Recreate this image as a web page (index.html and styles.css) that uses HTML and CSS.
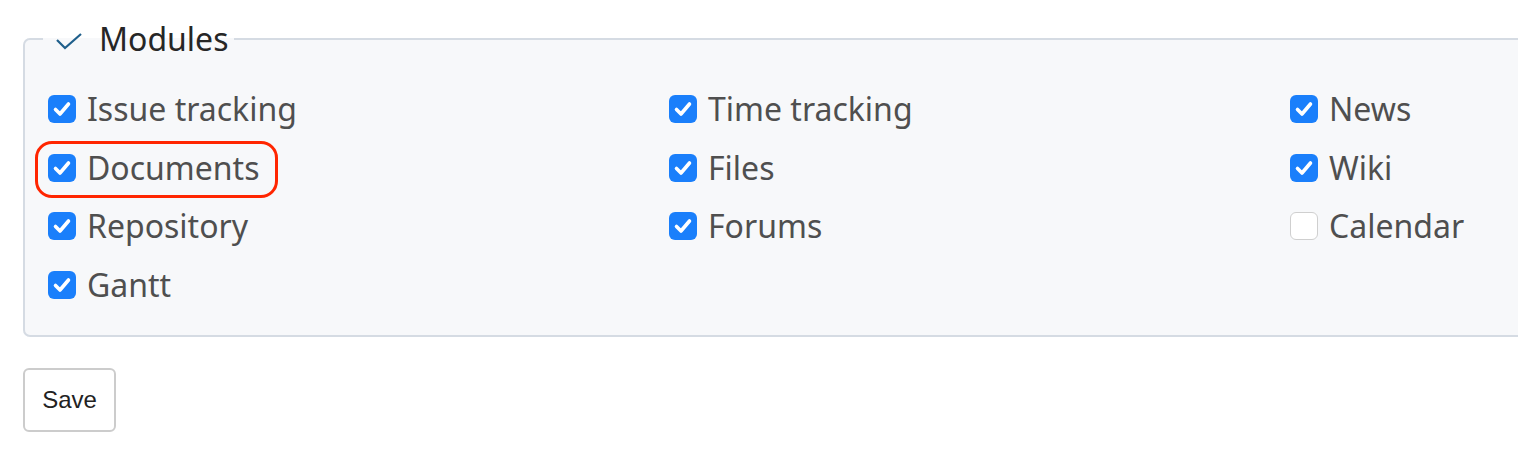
FILE: index.html
```html
<!DOCTYPE html>
<html lang="en">
<head>
<meta charset="utf-8">
<title>Modules</title>
<link rel="stylesheet" href="styles.css">
</head>
<body>
<div class="page">
  <fieldset class="box">
    <legend class="legend">
      <svg class="toggle" width="28" height="18" viewBox="0 0 28 18"><path d="M2 8 L10 16 L26 2" fill="none" stroke="#1f5f8b" stroke-width="2.2"/></svg>
      <span>Modules</span>
    </legend>
    <div class="grid">
      <label class="item"><span class="cb on"><svg viewBox="0 0 28 28"><path d="M7.5 14.5 L12 19 L20.5 9" fill="none" stroke="#fff" stroke-width="3.6" stroke-linecap="round" stroke-linejoin="round"/></svg></span>Issue tracking</label>
      <label class="item"><span class="cb on"><svg viewBox="0 0 28 28"><path d="M7.5 14.5 L12 19 L20.5 9" fill="none" stroke="#fff" stroke-width="3.6" stroke-linecap="round" stroke-linejoin="round"/></svg></span>Time tracking</label>
      <label class="item"><span class="cb on"><svg viewBox="0 0 28 28"><path d="M7.5 14.5 L12 19 L20.5 9" fill="none" stroke="#fff" stroke-width="3.6" stroke-linecap="round" stroke-linejoin="round"/></svg></span>News</label>
      <label class="item highlight"><span class="cb on"><svg viewBox="0 0 28 28"><path d="M7.5 14.5 L12 19 L20.5 9" fill="none" stroke="#fff" stroke-width="3.6" stroke-linecap="round" stroke-linejoin="round"/></svg></span>Documents</label>
      <label class="item"><span class="cb on"><svg viewBox="0 0 28 28"><path d="M7.5 14.5 L12 19 L20.5 9" fill="none" stroke="#fff" stroke-width="3.6" stroke-linecap="round" stroke-linejoin="round"/></svg></span>Files</label>
      <label class="item"><span class="cb on"><svg viewBox="0 0 28 28"><path d="M7.5 14.5 L12 19 L20.5 9" fill="none" stroke="#fff" stroke-width="3.6" stroke-linecap="round" stroke-linejoin="round"/></svg></span>Wiki</label>
      <label class="item"><span class="cb on"><svg viewBox="0 0 28 28"><path d="M7.5 14.5 L12 19 L20.5 9" fill="none" stroke="#fff" stroke-width="3.6" stroke-linecap="round" stroke-linejoin="round"/></svg></span>Repository</label>
      <label class="item"><span class="cb on"><svg viewBox="0 0 28 28"><path d="M7.5 14.5 L12 19 L20.5 9" fill="none" stroke="#fff" stroke-width="3.6" stroke-linecap="round" stroke-linejoin="round"/></svg></span>Forums</label>
      <label class="item"><span class="cb"></span>Calendar</label>
      <label class="item"><span class="cb on"><svg viewBox="0 0 28 28"><path d="M7.5 14.5 L12 19 L20.5 9" fill="none" stroke="#fff" stroke-width="3.6" stroke-linecap="round" stroke-linejoin="round"/></svg></span>Gantt</label>
    </div>
  </fieldset>
  <button class="save" type="button">Save</button>
</div>
</body>
</html>
```

FILE: styles.css
```css
html, body {
  margin: 0;
  padding: 0;
  background: #ffffff;
  overflow: hidden;
}

.page {
  width: 1518px;
  height: 468px;
  padding: 20px 0 0 23px;
  box-sizing: border-box;
  font-family: "Noto Sans", "Open Sans", sans-serif;
}

.box {
  width: 1540px;
  margin: 0;
  padding: 22px 0 21px 23px;
  border: 2px solid #d5dbe3;
  border-radius: 7px;
  background: #f7f8fa;
  box-sizing: border-box;
}

.legend {
  margin-left: -5px;
  padding: 0 6px 0 12px;
  display: flex;
  align-items: center;
  gap: 16px;
  font-size: 32px;
  line-height: 38px;
  color: #262626;
}

.toggle {
  display: block;
  margin-top: 4px;
}

.grid {
  display: grid;
  grid-template-columns: 621px 621px 621px;
  grid-auto-rows: 58.5px;
  align-items: center;
}

.item {
  display: flex;
  align-items: center;
  gap: 11px;
  font-size: 32px;
  line-height: 44px;
  color: #4f4f4f;
  position: relative;
  width: max-content;
}

.cb {
  width: 28px;
  height: 28px;
  box-sizing: border-box;
  border-radius: 6px;
  border: 1.5px solid #cfcfcf;
  background: #ffffff;
  display: block;
  flex: none;
  overflow: hidden;
}

.cb.on {
  background: #1a7ffb;
  border: none;
}

.cb svg {
  display: block;
  width: 28px;
  height: 28px;
}

.highlight::after {
  content: "";
  position: absolute;
  left: -13px;
  right: -19px;
  top: -5px;
  bottom: -8px;
  border: 3px solid #ff2500;
  border-radius: 17px;
}

.save {
  display: block;
  margin-top: 31px;
  width: 93px;
  height: 64px;
  border: 2px solid #cccccc;
  border-radius: 6px;
  background: #ffffff;
  font-family: "Liberation Sans", Arial, sans-serif;
  font-size: 24px;
  color: #222222;
  padding: 0;
}
```
